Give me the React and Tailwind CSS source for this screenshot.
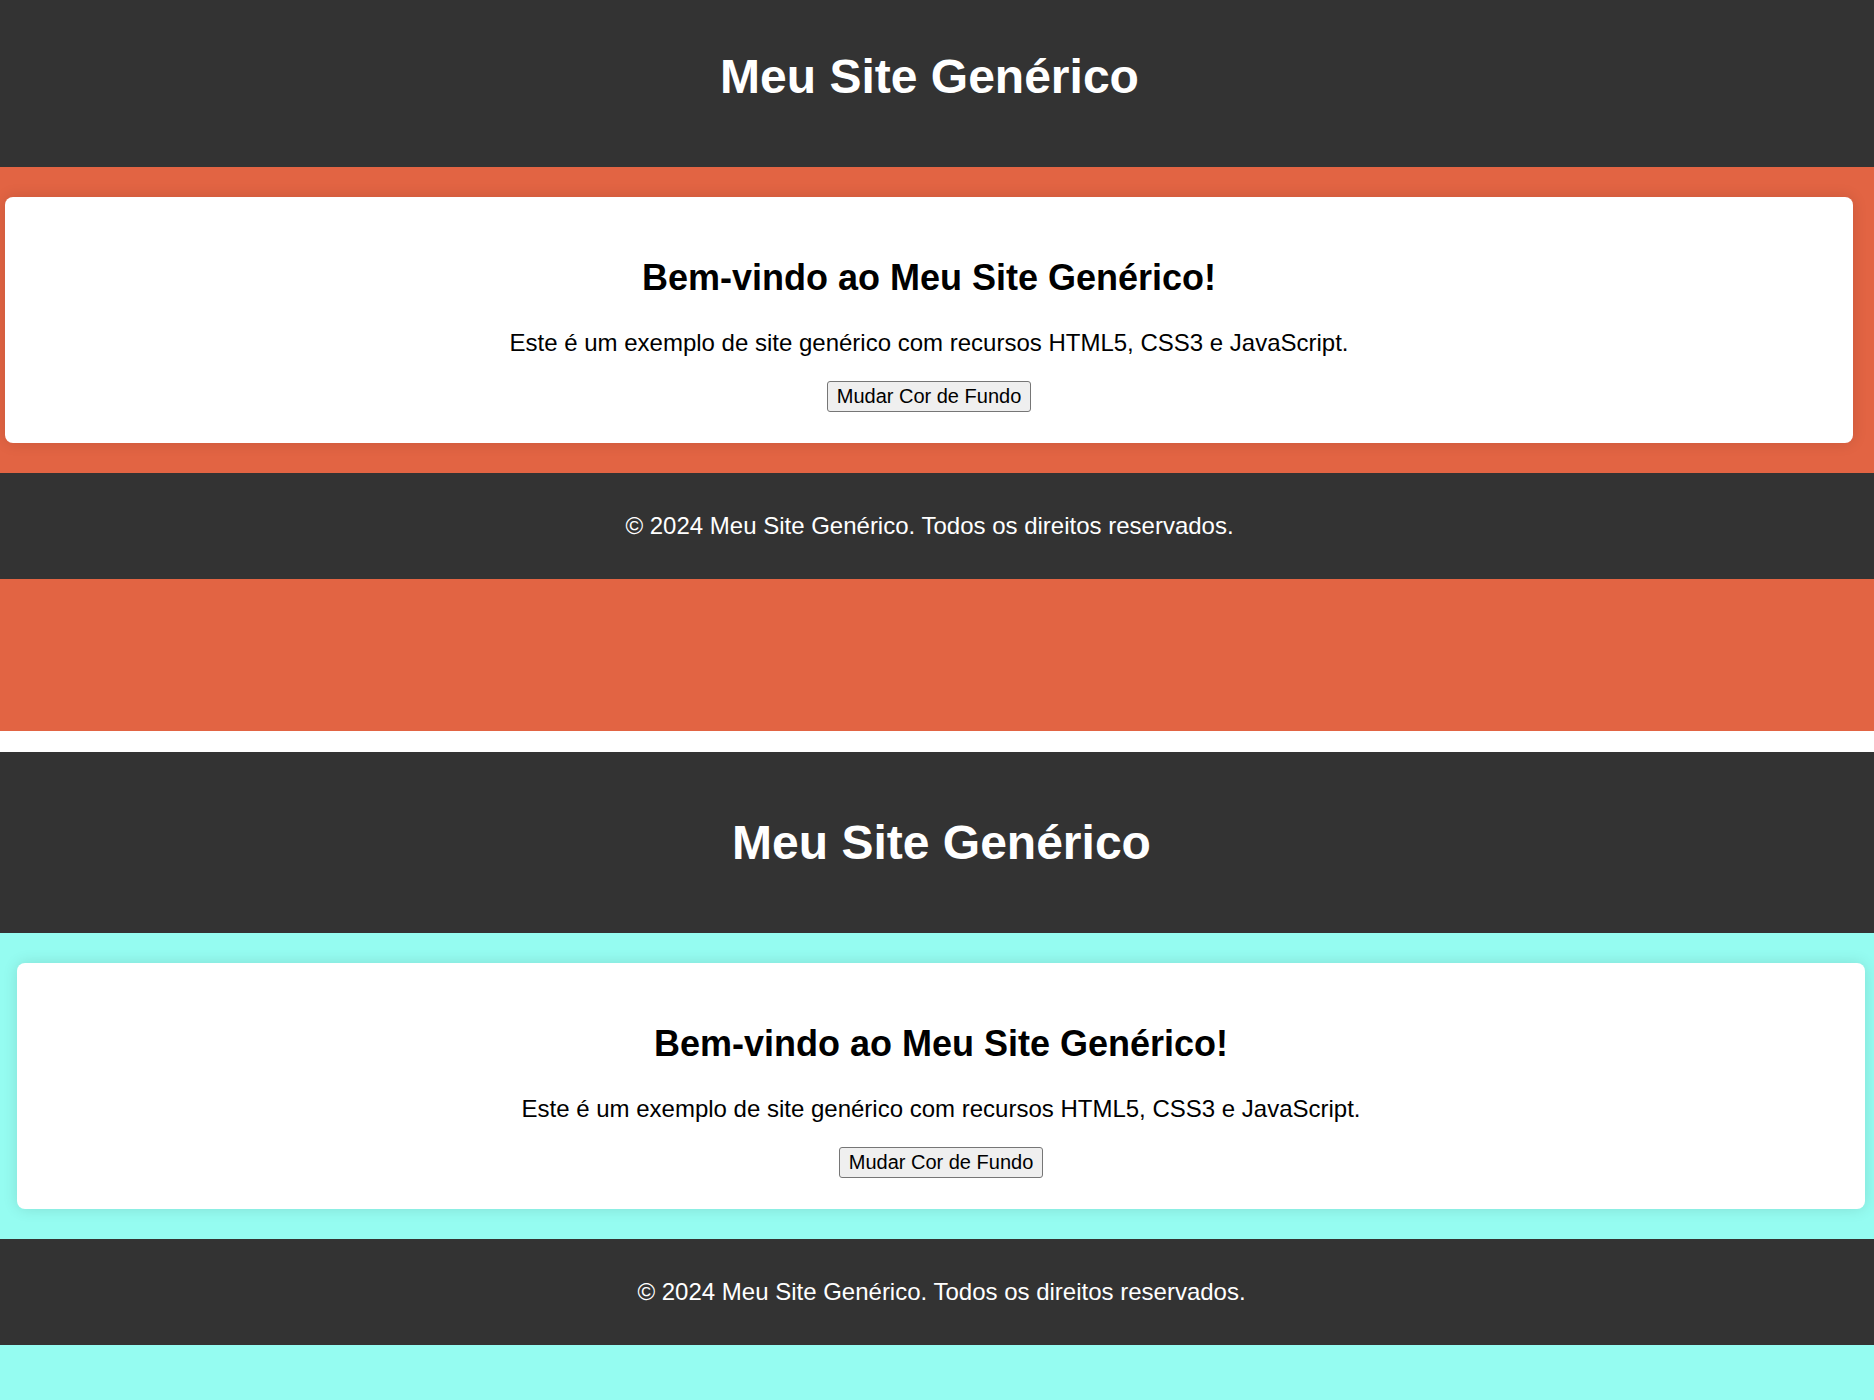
import { useState } from "react";

const FONT = { fontFamily: '"Liberation Sans", Arial, sans-serif' };

// one copy of the generic page; `bg` is the body colour after the button was clicked
function GenericPage({ bg }) {
  return (
    <div className={`w-[1890px] min-h-[745px] ${bg}`} style={FONT}>
      <header className="bg-[#333333] text-white text-center h-[181px] flex items-center justify-center pr-[7px]">
        <h1 className="text-[48px] font-bold leading-[55px]">Meu Site Genérico</h1>
      </header>

      <main className="py-[30px] pl-[17px] pr-[25px]">
        <section className="bg-white rounded-lg shadow-[0_0_15px_rgba(0,0,0,0.12)] text-center text-black px-[30px] pt-[30px] pb-[31px]">
          <h2 className="text-[36px] font-bold leading-[41px] mt-[30px] mb-[31px]">
            Bem-vindo ao Meu Site Genérico!
          </h2>
          <p className="text-[24px] leading-[28px] mb-[24px]">
            Este é um exemplo de site genérico com recursos HTML5, CSS3 e JavaScript.
          </p>
          <button
            className="h-[31px] px-[9px] text-[20px] leading-[23px] bg-[#efefef] border border-[#767676] rounded-[3px] text-black"
            style={FONT}
          >
            Mudar Cor de Fundo
          </button>
        </section>
      </main>

      <footer className="bg-[#333333] text-white text-center h-[106px] flex items-center justify-center pr-[7px]">
        <p className="text-[24px] leading-[28px]">© 2024 Meu Site Genérico. Todos os direitos reservados.</p>
      </footer>
    </div>
  );
}

export default function App() {
  const [frames] = useState(["bg-[#e26443]", "bg-[#95fcf1]"]);

  return (
    <div className="w-[1874px] h-[1400px] bg-white overflow-hidden">
      {/* first capture: scrolled a little down and right */}
      <div className="h-[731px] overflow-hidden">
        <div className="-mt-[14px] -ml-[12px]">
          <GenericPage bg={frames[0]} />
        </div>
      </div>

      <div className="h-[21px]" />

      {/* second capture */}
      <div className="h-[648px] overflow-hidden">
        <GenericPage bg={frames[1]} />
      </div>
    </div>
  );
}
